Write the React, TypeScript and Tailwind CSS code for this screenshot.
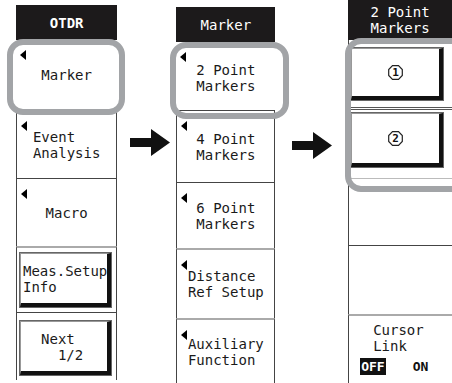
import React from "react";

const mono = "font-['DejaVu_Sans_Mono','Liberation_Mono',monospace]";

const Tri = () => (
  <span className="absolute left-[4px] top-[10px] h-0 w-0 border-y-[5px] border-r-[6px] border-y-transparent border-r-black" />
);

const Text = ({ children }: { children: React.ReactNode }) => (
  <div className={`whitespace-pre text-left text-[14px] leading-[16px] text-[#1a1a1a] ${mono}`}>{children}</div>
);

const Cell = ({
  h,
  tri = true,
  sides = true,
  top = "",
  children,
}: {
  h: string;
  tri?: boolean;
  sides?: boolean;
  top?: string;
  children?: React.ReactNode;
}) => (
  <div className={`relative flex items-center justify-center ${h} ${sides ? "border-x border-[#444]" : ""} ${top}`}>
    {tri && <Tri />}
    {children}
  </div>
);

const Raised = ({ cls, children }: { cls: string; children: React.ReactNode }) => (
  <div className={`${cls} border border-[#666] bg-white`}>
    <div className="flex h-full w-full items-center border-b-[4px] border-l border-r-[4px] border-t border-b-[#111] border-l-[#999] border-r-[#111] border-t-[#999]">
      {children}
    </div>
  </div>
);

const Octa = ({ n }: { n: string }) => (
  <span className="relative inline-flex h-[15px] w-[15px] items-center justify-center">
    <svg className="absolute inset-0" width="15" height="15" viewBox="0 0 15 15">
      <polygon points="4.5,0.7 10.5,0.7 14.3,4.5 14.3,10.5 10.5,14.3 4.5,14.3 0.7,10.5 0.7,4.5" fill="white" stroke="#222" strokeWidth="1.2" />
    </svg>
    <span className={`relative text-[11px] font-bold leading-none text-[#111] ${mono}`}>{n}</span>
  </span>
);

const Header = ({ h, bold = false, children }: { h: string; bold?: boolean; children: React.ReactNode }) => (
  <div className={`flex items-center justify-center bg-[#1c1a1b] ${h}`}>
    <div className={`whitespace-pre text-left text-[14px] ${bold ? "font-bold" : "font-normal"} leading-[16px] text-white ${mono}`}>{children}</div>
  </div>
);

const Arrow = () => (
  <svg width="40" height="27" viewBox="0 0 40 27">
    <polygon points="0,9 21,9 21,0 40,13.5 21,27 21,18 0,18" fill="#111" />
  </svg>
);

export default function App() {
  return (
    <div className="relative h-[383px] w-[452px] overflow-hidden bg-white">
      <div className="flex items-start">
        {/* Left column */}
        <div className="ml-[16px] mt-[5px] flex w-[102px] flex-col">
          <Header h="h-[35px]" bold>
            OTDR
          </Header>
          <Cell h="h-[70px]" sides={false}>
            <Text>Marker</Text>
          </Cell>
          <Cell h="h-[68px]" top="border-t border-[#444]">
            <Text>{"Event\nAnalysis"}</Text>
          </Cell>
          <Cell h="h-[68px]" top="border-t border-[#444]">
            <Text>Macro</Text>
          </Cell>
          <div className="flex h-[66px] flex-col border-x border-t-[2px] border-[#444] border-t-[#aaa] pl-[2px] pr-[4px] pt-[4px]">
            <Raised cls="h-[56px] w-full">
              <div className="pl-[2px]">
                <Text>{"Meas.Setup\nInfo"}</Text>
              </div>
            </Raised>
          </div>
          <div className="flex h-[68px] flex-col border-x border-t border-[#444] pl-[2px] pr-[4px] pt-[7px]">
            <Raised cls="h-[56px] w-full">
              <div className="flex w-full justify-center pr-[4px]">
                <Text>{"Next\n  1/2"}</Text>
              </div>
            </Raised>
          </div>
        </div>

        {/* Arrow 1 */}
        <div className="w-[60px] pl-[13px] pt-[129px]">
          <Arrow />
        </div>

        {/* Middle column */}
        <div className="mt-[7px] flex w-[101px] flex-col">
          <Header h="h-[35px]">Marker</Header>
          <Cell h="h-[68px]" sides={false}>
            <div className="pt-[4px]">
              <Text>{"2 Point\nMarkers"}</Text>
            </div>
          </Cell>
          <Cell h="h-[72px]" top="border-t border-[#444]">
            <Text>{"4 Point\nMarkers"}</Text>
          </Cell>
          <Cell h="h-[66px]" top="border-t border-[#444]">
            <Text>{"6 Point\nMarkers"}</Text>
          </Cell>
          <Cell h="h-[70px]" top="border-t-[2px] border-t-[#aaa]">
            <Text>{"Distance\nRef Setup"}</Text>
          </Cell>
          <Cell h="h-[65px]" top="border-t-[2px] border-t-[#aaa]">
            <Text>{"Auxiliary\nFunction"}</Text>
          </Cell>
        </div>

        {/* Arrow 2 */}
        <div className="w-[74px] pl-[17px] pt-[132px]">
          <Arrow />
        </div>

        {/* Right column */}
        <div className="flex w-[106px] flex-col">
          <Header h="h-[40px]">{"2 Point\nMarkers"}</Header>
          <div className="flex h-[70px] flex-col border-l border-[#444] pl-[1px] pt-[7px]">
            <Raised cls="h-[55px] w-[94px]">
              <div className="flex w-full justify-center">
                <Octa n="1" />
              </div>
            </Raised>
            <div className="mt-[6px] h-[3px] border-y border-[#555]" />
          </div>
          <div className="flex h-[68px] flex-col border-l border-[#444] pl-[1px] pt-[2px]">
            <Raised cls="h-[56px] w-[94px]">
              <div className="flex w-full justify-center">
                <Octa n="2" />
              </div>
            </Raised>
          </div>
          <div className="h-[67px] border-l border-t border-[#444] border-t-[#bbb]" />
          <div className="h-[69px] border-l border-t border-[#444]" />
          <div className="flex h-[69px] flex-col border-l border-t-[2px] border-[#444] border-t-[#aaa] pl-[24px] pt-[6px]">
            <Text>{"Cursor\nLink"}</Text>
            <div className={`mt-[4px] -ml-[13px] flex items-center text-[13px] font-bold leading-[15px] ${mono}`}>
              <span className="bg-[#111] px-[1px] py-[1px] text-white">OFF</span>
              <span className="ml-[27px] text-[#111]">ON</span>
            </div>
          </div>
        </div>
      </div>

      {/* Highlight overlays */}
      <div className="pointer-events-none absolute left-[7px] top-[39px] h-[76px] w-[118px] rounded-[16px] border-[6px] border-[#a2a4a7]" />
      <div className="pointer-events-none absolute left-[170px] top-[42px] h-[77px] w-[119px] rounded-[16px] border-[6px] border-[#a2a4a7]" />
      <div className="pointer-events-none absolute left-[345px] top-[38px] h-[154px] w-[124px] rounded-[16px] border-[6px] border-[#a2a4a7]" />
    </div>
  );
}
